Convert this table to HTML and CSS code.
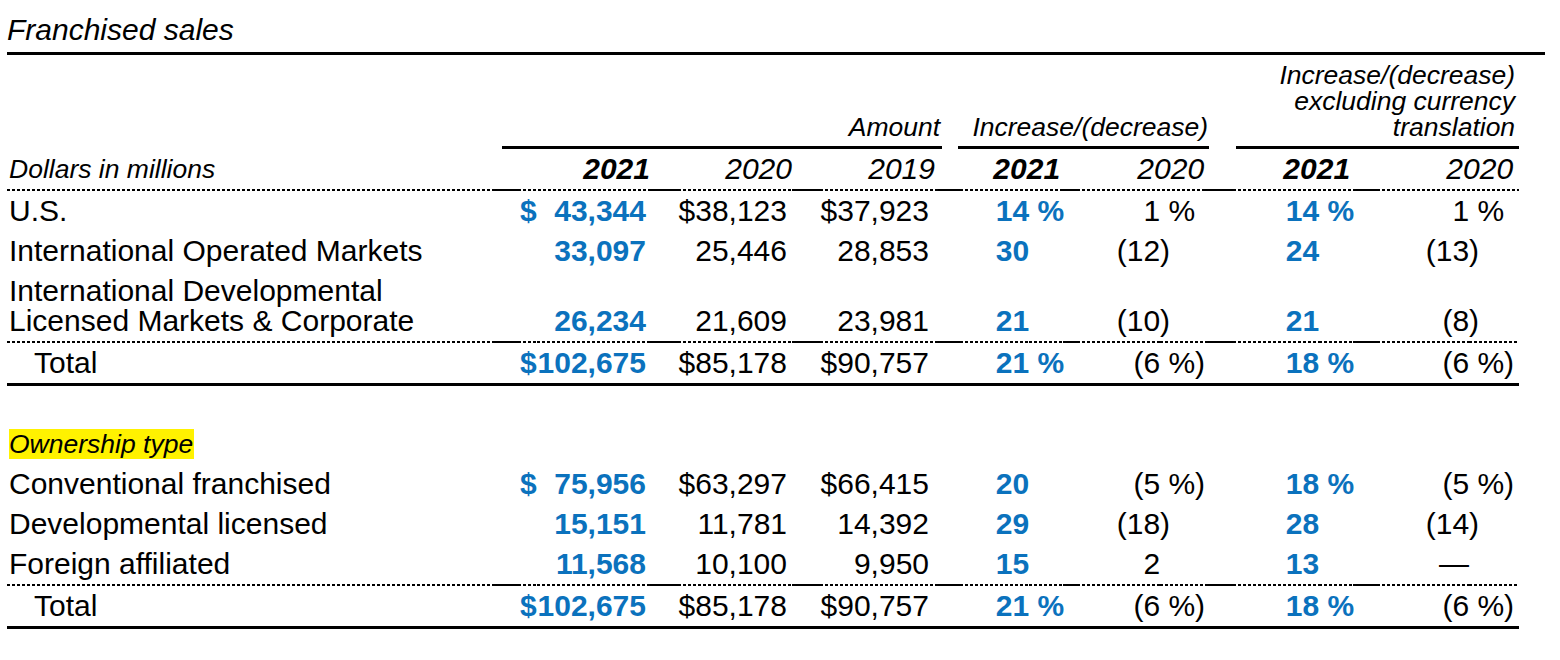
FILE: index.html
```html
<!DOCTYPE html>
<html lang="en">
<head>
<meta charset="utf-8">
<title>Franchised sales</title>
<link rel="stylesheet" href="styles.css">
</head>
<body>
<div class="page">
  <h1 class="title">Franchised sales</h1>
  <table class="fin">
    <colgroup>
      <col class="c-label"><col class="c-sp1"><col class="c-dol"><col class="c-a21">
      <col class="c-sp2"><col class="c-a20"><col class="c-sp2"><col class="c-a19">
      <col class="c-sp1"><col class="c-i21n"><col class="c-i21s"><col class="c-sp3">
      <col class="c-i20n"><col class="c-i20s"><col class="c-sp2"><col class="c-e21n">
      <col class="c-e21s"><col class="c-sp4"><col class="c-e20n"><col class="c-e20s">
    </colgroup>
    <thead>
      <tr class="groups">
        <td></td>
        <td colspan="8" class="gcell"><div class="grp grp-amt">Amount</div></td>
        <td colspan="6" class="gcell"><div class="grp grp-inc">Increase/(decrease)</div></td>
        <td colspan="5" class="gcell"><div class="grp grp-exc">Increase/(decrease)<br>excluding currency<br>translation</div></td>
      </tr>
      <tr class="years sep">
        <td class="lbl hdr">Dollars in millions</td>
        <td class="sp"></td>
        <td colspan="2" class="yr strong">2021</td>
        <td class="sp"></td>
        <td class="yr">2020</td>
        <td class="sp"></td>
        <td class="yr">2019</td>
        <td class="sp"></td>
        <td colspan="2" class="yr strong yr-i21">2021</td>
        <td class="sp"></td>
        <td colspan="2" class="yr yr-i20">2020</td>
        <td class="sp"></td>
        <td colspan="2" class="yr strong yr-e21">2021</td>
        <td class="sp"></td>
        <td colspan="2" class="yr yr-e20">2020</td>
      </tr>
    </thead>
    <tbody>
      <tr>
        <td class="lbl">U.S.</td><td class="sp"></td>
        <td class="d b">$</td><td class="n a21 b">43,344</td><td class="sp"></td>
        <td class="n a20">$38,123</td><td class="sp"></td>
        <td class="n a19">$37,923</td><td class="sp"></td>
        <td class="n b">14</td><td class="s b">&nbsp;%</td><td class="sp"></td>
        <td class="n">1</td><td class="s">&nbsp;%</td><td class="sp"></td>
        <td class="n b">14</td><td class="s b">&nbsp;%</td><td class="sp"></td>
        <td class="n">1</td><td class="s">&nbsp;%</td>
      </tr>
      <tr>
        <td class="lbl">International Operated Markets</td><td class="sp"></td>
        <td class="d b"></td><td class="n a21 b">33,097</td><td class="sp"></td>
        <td class="n a20">25,446</td><td class="sp"></td>
        <td class="n a19">28,853</td><td class="sp"></td>
        <td class="n b">30</td><td class="s b"></td><td class="sp"></td>
        <td class="n">(12</td><td class="s">)</td><td class="sp"></td>
        <td class="n b">24</td><td class="s b"></td><td class="sp"></td>
        <td class="n">(13</td><td class="s">)</td>
      </tr>
      <tr class="sep">
        <td class="lbl">International Developmental<br>Licensed Markets &amp; Corporate</td><td class="sp"></td>
        <td class="d b"></td><td class="n a21 b">26,234</td><td class="sp"></td>
        <td class="n a20">21,609</td><td class="sp"></td>
        <td class="n a19">23,981</td><td class="sp"></td>
        <td class="n b">21</td><td class="s b"></td><td class="sp"></td>
        <td class="n">(10</td><td class="s">)</td><td class="sp"></td>
        <td class="n b">21</td><td class="s b"></td><td class="sp"></td>
        <td class="n">(8</td><td class="s">)</td>
      </tr>
      <tr class="total">
        <td class="lbl tot">Total</td><td class="sp"></td>
        <td class="d b">$</td><td class="n a21 b">102,675</td><td class="sp"></td>
        <td class="n a20">$85,178</td><td class="sp"></td>
        <td class="n a19">$90,757</td><td class="sp"></td>
        <td class="n b">21</td><td class="s b">&nbsp;%</td><td class="sp"></td>
        <td class="n">(6</td><td class="s">&nbsp;%)</td><td class="sp"></td>
        <td class="n b">18</td><td class="s b">&nbsp;%</td><td class="sp"></td>
        <td class="n">(6</td><td class="s">&nbsp;%)</td>
      </tr>
      <tr class="gap"><td colspan="20"></td></tr>
      <tr>
        <td class="lbl"><span class="hl">Ownership type</span></td>
        <td colspan="19"></td>
      </tr>
      <tr>
        <td class="lbl">Conventional franchised</td><td class="sp"></td>
        <td class="d b">$</td><td class="n a21 b">75,956</td><td class="sp"></td>
        <td class="n a20">$63,297</td><td class="sp"></td>
        <td class="n a19">$66,415</td><td class="sp"></td>
        <td class="n b">20</td><td class="s b"></td><td class="sp"></td>
        <td class="n">(5</td><td class="s">&nbsp;%)</td><td class="sp"></td>
        <td class="n b">18</td><td class="s b">&nbsp;%</td><td class="sp"></td>
        <td class="n">(5</td><td class="s">&nbsp;%)</td>
      </tr>
      <tr>
        <td class="lbl">Developmental licensed</td><td class="sp"></td>
        <td class="d b"></td><td class="n a21 b">15,151</td><td class="sp"></td>
        <td class="n a20">11,781</td><td class="sp"></td>
        <td class="n a19">14,392</td><td class="sp"></td>
        <td class="n b">29</td><td class="s b"></td><td class="sp"></td>
        <td class="n">(18</td><td class="s">)</td><td class="sp"></td>
        <td class="n b">28</td><td class="s b"></td><td class="sp"></td>
        <td class="n">(14</td><td class="s">)</td>
      </tr>
      <tr class="sep">
        <td class="lbl">Foreign affiliated</td><td class="sp"></td>
        <td class="d b"></td><td class="n a21 b">11,568</td><td class="sp"></td>
        <td class="n a20">10,100</td><td class="sp"></td>
        <td class="n a19">9,950</td><td class="sp"></td>
        <td class="n b">15</td><td class="s b"></td><td class="sp"></td>
        <td class="n">2</td><td class="s"></td><td class="sp"></td>
        <td class="n b">13</td><td class="s b"></td><td class="sp"></td>
        <td class="n">&mdash;</td><td class="s"></td>
      </tr>
      <tr class="total">
        <td class="lbl tot">Total</td><td class="sp"></td>
        <td class="d b">$</td><td class="n a21 b">102,675</td><td class="sp"></td>
        <td class="n a20">$85,178</td><td class="sp"></td>
        <td class="n a19">$90,757</td><td class="sp"></td>
        <td class="n b">21</td><td class="s b">&nbsp;%</td><td class="sp"></td>
        <td class="n">(6</td><td class="s">&nbsp;%)</td><td class="sp"></td>
        <td class="n b">18</td><td class="s b">&nbsp;%</td><td class="sp"></td>
        <td class="n">(6</td><td class="s">&nbsp;%)</td>
      </tr>
    </tbody>
  </table>
</div>
</body>
</html>
```

FILE: styles.css
```css
* { box-sizing: border-box; }

html, body {
  margin: 0;
  padding: 0;
  background: #ffffff;
  color: #000000;
  font-family: "Liberation Sans", Arial, Helvetica, sans-serif;
}

.page {
  width: 1545px;
  padding-left: 7px;
}

.title {
  margin: 13px 0 0;
  padding-bottom: 5px;
  border-bottom: 3px solid #000;
  font-size: 30px;
  line-height: 34px;
  font-style: italic;
  font-weight: normal;
}

.fin {
  width: 1512px;
  table-layout: fixed;
  border-collapse: separate;
  border-spacing: 0;
  font-size: 30px;
  line-height: 30px;
}

.c-label { width: 486px; }
.c-sp1 { width: 25px; }
.c-sp2 { width: 28px; }
.c-sp3 { width: 14px; }
.c-sp4 { width: 24px; }
.c-dol { width: 19px; }
.c-a21 { width: 113px; }
.c-a20 { width: 114px; }
.c-a19 { width: 115px; }
.c-i21n { width: 69px; }
.c-i21s { width: 34px; }
.c-i20n { width: 83px; }
.c-i20s { width: 45px; }
.c-e21n { width: 86px; }
.c-e21s { width: 34px; }
.c-e20n { width: 92px; }
.c-e20s { width: 50px; }

.fin td {
  padding: 5px 0;
  vertical-align: bottom;
  white-space: nowrap;
}

/* group headings */
.fin .gcell { padding: 0; }
.grp {
  border-bottom: 3px solid #000;
  padding-bottom: 6px;
  text-align: right;
  font-style: italic;
  font-size: 26.5px;
  line-height: 26px;
}
.grp-amt { margin: 0 18px 0 9px; padding-right: 2px; }
.grp-inc { margin: 0 24px 0 -2px; padding-right: 1px; }
.grp-exc { margin: 0 0 0 3px; padding: 7px 4px 6px 0; }

/* year row */
.hdr { font-style: italic; font-size: 26.5px; }
.yr { text-align: right; font-style: italic; }
.strong { font-weight: bold; }
.yr-i21 { padding-right: 3px !important; }
.yr-i20 { padding-right: 1px !important; }
.yr-e21 { padding-right: 3px !important; }
.yr-e20 { padding-right: 6px !important; }

/* labels */
.lbl { padding-left: 2px !important; }
.fin td.lbl { white-space: normal; }
.tot { padding-left: 27px !important; }
.hl {
  display: inline-block;
  background: #fff200;
  font-style: italic;
  font-size: 26.5px;
  line-height: 30px;
  padding: 0 1px 0 0;
}

/* numbers */
.b { color: #0b72bd; font-weight: bold; }
.d { text-align: left; padding-left: 2px !important; }
.n { text-align: right; }
.s { text-align: left; }
.a21 { padding-right: 4px !important; }
.a20 { padding-right: 5px !important; }
.a19 { padding-right: 6px !important; }

/* rules: dotted leader lines drawn in the bottom border area */
.sep td {
  border-bottom: 2px solid transparent;
  background-image: repeating-linear-gradient(to right, #000 0 3px, transparent 3px 5px);
  background-origin: border-box;
  background-clip: border-box;
  background-position: left bottom;
  background-size: 100% 2px;
  background-repeat: no-repeat;
}
.sep td.sp {
  background-image: linear-gradient(#000, #000);
}
.total td { border-bottom: 3px solid #000; }
.fin .gap td { height: 37px; padding: 0; }
```
